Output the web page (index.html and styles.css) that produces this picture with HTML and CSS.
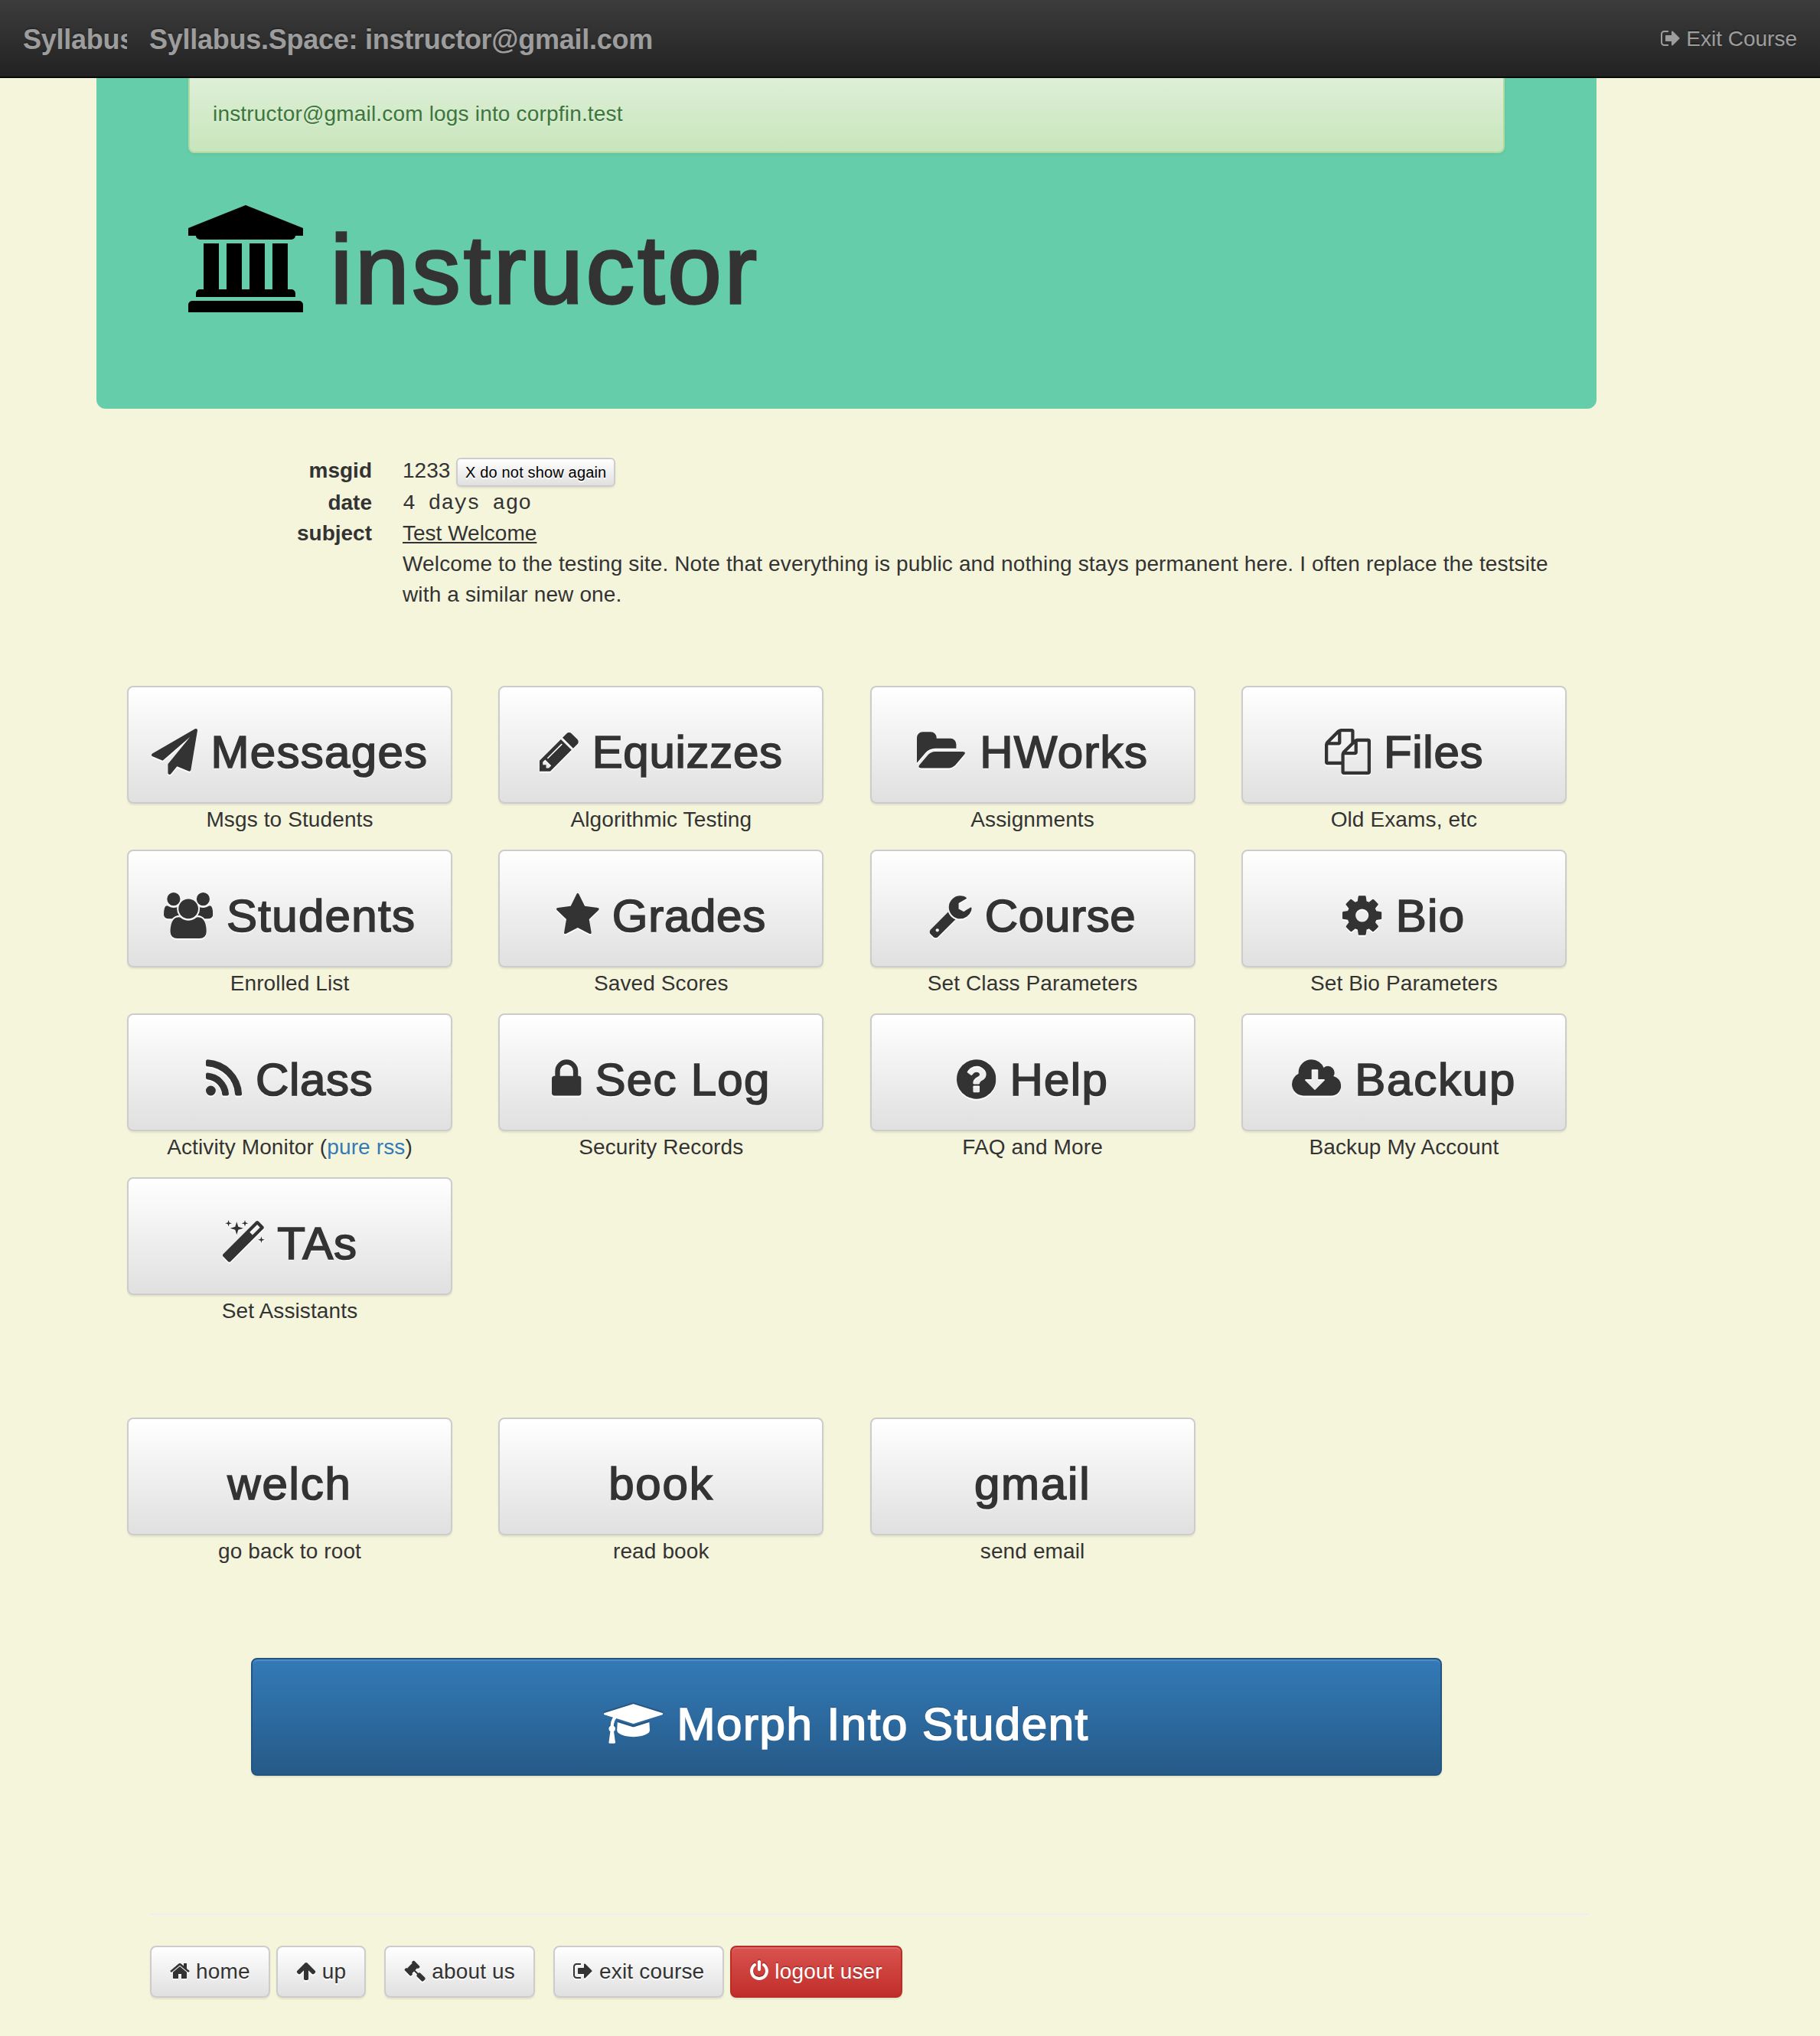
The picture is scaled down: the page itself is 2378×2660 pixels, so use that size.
FILE: index.html
```html
<!DOCTYPE html>
<html lang="en">
<head>
<meta charset="utf-8">
<title>Syllabus.Space</title>
<link rel="stylesheet" href="styles.css">
</head>
<body>
<svg class="sprite" width="0" height="0">
<symbol id="university" viewBox="0 0 1920 1792"><path d="M960 0l960 384v128h-128q0 26-20.5 45t-48.5 19h-1526q-28 0-48.5-19t-20.5-45h-128v-128zm-704 640h256v768h128v-768h256v768h128v-768h256v768h128v-768h256v768h59q28 0 48.5 19t20.5 45v64h-1664v-64q0-26 20.5-45t48.5-19h59v-768zm1595 960q28 0 48.5 19t20.5 45v128h-1920v-128q0-26 20.5-45t48.5-19h1782z"/></symbol>
<symbol id="plane" viewBox="0 0 1792 1792"><path d="M1764 11q33 24 27 64l-256 1536q-5 29-32 45-14 8-31 8-11 0-24-5l-453-185-242 295q-18 23-49 23-13 0-22-4-19-7-30.5-23.5t-11.5-36.5v-349l864-1059-1069 925-395-162q-37-14-40-55-2-40 32-59l1664-960q15-9 32-9 20 0 36 11z"/></symbol>
<symbol id="pencil" viewBox="128 0 1536 1792"><path d="M491 1536l91-91-235-235-91 91v107h128v128h107zm523-928q0-22-22-22-10 0-17 7l-542 542q-7 7-7 17 0 22 22 22 10 0 17-7l542-542q7-7 7-17zm-54-192l416 416-832 832h-416v-416zm683 96q0 53-37 90l-166 166-416-416 166-165q36-38 90-38 53 0 91 38l235 234q37 39 37 91z"/></symbol>
<symbol id="folder" viewBox="-64 0 1920 1792"><path d="M1815 952q0 31-31 66l-336 396q-43 51-120.5 86.5t-143.5 35.5h-1088q-34 0-60.5-13t-26.5-43q0-31 31-66l336-396q43-51 120.5-86.5t143.5-35.5h1088q34 0 60.5 13t26.5 43zm-343-344v160h-832q-94 0-197 47.5t-164 119.5l-337 396-5 6q0-4-.5-12.5t-.5-12.5v-960q0-92 66-158t158-66h320q92 0 158 66t66 158v32h544q92 0 158 66t66 158z"/></symbol>
<symbol id="files" viewBox="0 0 1792 1792"><path d="M1696 384q40 0 68 28t28 68v1216q0 40-28 68t-68 28h-960q-40 0-68-28t-28-68v-288h-544q-40 0-68-28t-28-68v-672q0-40 20-88t48-76l408-408q28-28 76-48t88-20h416q40 0 68 28t28 68v328q68-40 128-40h416zm-544 213l-299 299h299v-299zm-640-384l-299 299h299v-299zm196 647l316-316v-416h-384v416q0 40-28 68t-68 28h-416v640h512v-256q0-40 20-88t48-76zm956 804v-1152h-384v416q0 40-28 68t-68 28h-416v640h896z"/></symbol>
<symbol id="users" viewBox="0 0 1920 1792"><path transform="matrix(1 0 0 -1 0 1536)" d="M593 640q-162 -5 -265 -128h-134q-82 0 -138 40.5t-56 118.5q0 353 124 353q6 0 43.5 -21t97.5 -42.5t119 -21.5q67 0 133 23q-5 -37 -5 -66q0 -139 81 -256zM1664 3q0 -120 -73 -189.5t-194 -69.5h-874q-121 0 -194 69.5t-73 189.5q0 53 3.5 103.5t14 109t26.5 108.5t43 97.5t62 81t85.5 53.5t111.5 20q10 0 43 -21.5t73 -48t107 -48t135 -21.5t135 21.5t107 48t73 48t43 21.5q61 0 111.5 -20t85.5 -53.5t62 -81t43 -97.5t26.5 -108.5t14 -109t3.5 -103.5zM640 1280q0 -106 -75 -181t-181 -75t-181 75t-75 181t75 181t181 75t181 -75t75 -181zM1344 896q0 -159 -112.5 -271.5t-271.5 -112.5t-271.5 112.5t-112.5 271.5t112.5 271.5t271.5 112.5t271.5 -112.5t112.5 -271.5zM1920 671q0 -78 -56 -118.5t-138 -40.5h-134q-103 123 -265 128q81 117 81 256q0 29 -5 66q66 -23 133 -23q59 0 119 21.5t97.5 42.5t43.5 21q124 0 124 -353zM1792 1280q0 -106 -75 -181t-181 -75t-181 75t-75 181t75 181t181 75t181 -75t75 -181z"/></symbol>
<symbol id="star" viewBox="64 0 1664 1792"><path d="M1728 647q0 22-26 48l-363 354 86 500q1 7 1 20 0 21-10.5 35.5t-30.5 14.5q-19 0-40-12l-449-236-449 236q-22 12-40 12-21 0-31.5-14.5t-10.5-35.5q0-6 2-20l86-500-364-354q-25-27-25-48 0-37 56-46l502-73 225-455q19-41 49-41t49 41l225 455 502 73q56 9 56 46z"/></symbol>
<symbol id="wrench" viewBox="64 0 1664 1792"><path d="M448 1472q0-26-19-45t-45-19-45 19-19 45 19 45 45 19 45-19 19-45zm644-420l-682 682q-37 37-90 37-52 0-91-37l-106-108q-38-36-38-90 0-53 38-91l681-681q39 98 114.5 173.5t173.5 114.5zm634-435q0 39-23 106-47 134-164.5 217.5t-258.5 83.5q-185 0-316.5-131.5t-131.5-316.5 131.5-316.5 316.5-131.5q58 0 121.5 16.5t107.5 46.5q16 11 16 28t-16 28l-293 169v224l193 107q5-3 79-48.5t135.5-81 70.5-35.5q15 0 23.5 10t8.5 25z"/></symbol>
<symbol id="cog" viewBox="128 0 1536 1792"><path d="M1152 896q0-106-75-181t-181-75-181 75-75 181 75 181 181 75 181-75 75-181zm512-109v222q0 12-8 23t-20 13l-185 28q-19 54-39 91 35 50 107 138 10 12 10 25t-9 23q-27 37-99 108t-94 71q-12 0-26-9l-138-108q-44 23-91 38-16 136-29 186-7 28-36 28h-222q-14 0-24.5-8.5t-11.5-21.5l-28-184q-49-16-90-37l-141 107q-10 9-25 9-14 0-25-11-126-114-165-168-7-10-7-23 0-12 8-23 15-21 51-66.5t54-70.5q-27-50-41-99l-183-27q-13-2-21-12.5t-8-23.5v-222q0-12 8-23t19-13l186-28q14-46 39-92-40-57-107-138-10-12-10-24 0-10 9-23 26-36 98.5-107.5t94.5-71.5q13 0 26 10l138 107q44-23 91-38 16-136 29-186 7-28 36-28h222q14 0 24.5 8.5t11.5 21.5l28 184q49 16 90 37l142-107q9-9 24-9 13 0 25 10 129 119 165 170 7 8 7 22 0 12-8 23-15 21-51 66.5t-54 70.5q26 50 41 98l183 28q13 2 21 12.5t8 23.5z"/></symbol>
<symbol id="rss" viewBox="192 0 1408 1792"><path d="M576 1344q0 80-56 136t-136 56-136-56-56-136 56-136 136-56 136 56 56 136zm512 123q2 28-17 48-18 21-47 21h-135q-25 0-43-16.5t-20-41.5q-22-229-184.5-391.5t-391.5-184.5q-25-2-41.5-20t-16.5-43v-135q0-29 21-47 17-17 43-17h5q160 13 306 80.5t259 181.5q114 113 181.5 259t80.5 306zm512 2q2 27-18 47-18 20-46 20h-143q-26 0-44.5-17.5t-19.5-42.5q-12-215-101-408.5t-231.5-336-336-231.5-408.5-102q-25-1-42.5-19.5t-17.5-43.5v-143q0-28 20-46 18-18 44-18h3q262 13 501.5 120t425.5 294q187 186 294 425.5t120 501.5z"/></symbol>
<symbol id="lock" viewBox="320 0 1152 1792"><path d="M640 768h512v-192q0-106-75-181t-181-75-181 75-75 181v192zm832 96v576q0 40-28 68t-68 28h-960q-40 0-68-28t-28-68v-576q0-40 28-68t68-28h32v-192q0-184 132-316t316-132 316 132 132 316v192h32q40 0 68 28t28 68z"/></symbol>
<symbol id="question" viewBox="128 0 1536 1792"><path d="M1024 1376v-192q0-14-9-23t-23-9h-192q-14 0-23 9t-9 23v192q0 14 9 23t23 9h192q14 0 23-9t9-23zm256-672q0-88-55.5-163t-138.5-116-170-41q-243 0-371 213-15 24 8 42l132 100q7 6 19 6 16 0 25-12 53-68 86-92 34-24 86-24 48 0 85.5 26t37.5 59q0 38-20 61t-68 45q-63 28-115.5 86.5t-52.5 125.5v36q0 14 9 23t23 9h192q14 0 23-9t9-23q0-19 21.5-49.5t54.5-49.5q32-18 49-28.5t46-35 44.5-48 28-60.5 12.5-81zm384 192q0 209-103 385.5t-279.5 279.5-385.5 103-385.5-103-279.5-279.5-103-385.5 103-385.5 279.5-279.5 385.5-103 385.5 103 279.5 279.5 103 385.5z"/></symbol>
<symbol id="cloud" viewBox="-64 0 1920 1792"><path d="M1216 928q0-14-9-23t-23-9h-224v-352q0-13-9.5-22.5t-22.5-9.5h-192q-13 0-22.5 9.5t-9.5 22.5v352h-224q-13 0-22.5 9.5t-9.5 22.5q0 14 9 23l352 352q9 9 23 9t23-9l351-351q10-12 10-24zm640 224q0 159-112.5 271.5t-271.5 112.5h-1088q-185 0-316.5-131.5t-131.5-316.5q0-130 70-240t188-165q-2-30-2-43 0-212 150-362t362-150q156 0 285.5 87t188.5 231q71-62 166-62 106 0 181 75t75 181q0 76-41 138 130 31 213.5 135.5t83.5 238.5z"/></symbol>
<symbol id="magic" viewBox="0 0 1664 1792"><path transform="matrix(1 0 0 -1 0 1536)" d="M1190 955l293 293l-107 107l-293 -293zM1637 1248q0 -27 -18 -45l-1286 -1286q-18 -18 -45 -18t-45 18l-198 198q-18 18 -18 45t18 45l1286 1286q18 18 45 18t45 -18l198 -198q18 -18 18 -45zM286 1438l98 -30l-98 -30l-30 -98l-30 98l-98 30l98 30l30 98zM636 1276l196 -60l-196 -60l-60 -196l-60 196l-196 60l196 60l60 196zM1566 798l98 -30l-98 -30l-30 -98l-30 98l-98 30l98 30l30 98zM926 1438l98 -30l-98 -30l-30 -98l-30 98l-98 30l98 30l30 98z"/></symbol>
<symbol id="cap" viewBox="0 0 2304 1792"><path transform="matrix(1 0 0 -1 0 1536)" d="M1774 700l18 -316q4 -69 -82 -128t-235 -93.5t-323 -34.5t-323 34.5t-235 93.5t-82 128l18 316l574 -181q22 -7 48 -7t48 7zM2304 1024q0 -23 -22 -31l-1120 -352q-4 -1 -10 -1t-10 1l-652 206q-43 -34 -71 -111.5t-34 -178.5q63 -36 63 -109q0 -69 -58 -107l58 -433q2 -14 -8 -25q-9 -11 -24 -11h-192q-15 0 -24 11q-10 11 -8 25l58 433q-58 38 -58 107q0 73 65 111q11 207 98 330l-333 104q-22 8 -22 31t22 31l1120 352q4 1 10 1t10 -1l1120 -352q22 -8 22 -31z"/></symbol>
<symbol id="home" viewBox="0 0 1664 1792"><path transform="matrix(1 0 0 -1 0 1536)" d="M1408 544v-480q0 -26 -19 -45t-45 -19h-384v384h-256v-384h-384q-26 0 -45 19t-19 45v480q0 1 0.5 3t0.5 3l575 474l575 -474q1 -2 1 -6zM1631 613l-62 -74q-8 -9 -21 -11h-3q-13 0 -21 7l-692 577l-692 -577q-12 -8 -24 -7q-13 2 -21 11l-62 74q-8 10 -7 23.5t11 21.5l719 599q32 26 76 26t76 -26l244 -204v195q0 14 9 23t23 9h192q14 0 23 -9t9 -23v-408l219 -182q10 -8 11 -21.5t-7 -23.5z"/></symbol>
<symbol id="up" viewBox="0 0 1664 1792"><path transform="matrix(1 0 0 -1 0 1536)" d="M1611 565q0 -51 -37 -90l-75 -75q-38 -38 -91 -38q-54 0 -90 38l-294 293v-704q0 -52 -37.5 -84.5t-90.5 -32.5h-128q-53 0 -90.5 32.5t-37.5 84.5v704l-294 -293q-36 -38 -90 -38t-90 38l-75 75q-38 38 -38 90q0 53 38 91l651 651q35 37 90 37q54 0 91 -37l651 -651q37 -39 37 -91z"/></symbol>
<symbol id="gavel" viewBox="0 0 1792 1792"><path transform="matrix(1 0 0 -1 0 1536)" d="M1771 0q0 -53 -37 -90l-107 -108q-39 -37 -91 -37q-53 0 -90 37l-363 364q-38 36 -38 90q0 53 43 96l-256 256l-126 -126q-14 -14 -34 -14t-34 14q2 -2 12.5 -12t12.5 -13t10 -11.5t10 -13.5t6 -13.5t5.5 -16.5t1.5 -18q0 -38 -28 -68q-3 -3 -16.5 -18t-19 -20.5t-18.5 -16.5t-22 -15.5t-22 -9t-26 -4.5q-40 0 -68 28l-408 408q-28 28 -28 68q0 13 4.5 26t9 22t15.5 22t16.5 18.5t20.5 19t18 16.5q30 28 68 28q10 0 18 -1.5t16.5 -5.5t13.5 -6t13.5 -10t11.5 -10t13 -12.5t12 -12.5q-14 14 -14 34t14 34l348 348q14 14 34 14t34 -14q-2 2 -12.5 12t-12.5 13t-10 11.5t-10 13.5t-6 13.5t-5.5 16.5t-1.5 18q0 38 28 68q3 3 16.5 18t19 20.5t18.5 16.5t22 15.5t22 9t26 4.5q40 0 68 -28l408 -408q28 -28 28 -68q0 -13 -4.5 -26t-9 -22t-15.5 -22t-16.5 -18.5t-20.5 -19t-18 -16.5q-30 -28 -68 -28q-10 0 -18 1.5t-16.5 5.5t-13.5 6t-13.5 10t-11.5 10t-13 12.5t-12 12.5q14 -14 14 -34t-14 -34l-126 -126l256 -256q43 43 96 43q52 0 91 -37l363 -363q37 -39 37 -91z"/></symbol>
<symbol id="signout" viewBox="0 0 1664 1792"><path transform="matrix(1 0 0 -1 0 1536)" d="M640 96q0 -4 1 -20t0.5 -26.5t-3 -23.5t-10 -19.5t-20.5 -6.5h-320q-119 0 -203.5 84.5t-84.5 203.5v704q0 119 84.5 203.5t203.5 84.5h320q13 0 22.5 -9.5t9.5 -22.5q0 -4 1 -20t0.5 -26.5t-3 -23.5t-10 -19.5t-20.5 -6.5h-320q-66 0 -113 -47t-47 -113v-704q0 -66 47 -113t113 -47h288h11h13t11.5 -1t11.5 -3t8 -5.5t7 -9t2 -13.5zM1568 640q0 -26 -19 -45l-544 -544q-19 -19 -45 -19t-45 19t-19 45v288h-448q-26 0 -45 19t-19 45v384q0 26 19 45t45 19h448v288q0 26 19 45t45 19t45 -19l544 -544q19 -19 19 -45z"/></symbol>
<symbol id="power" viewBox="0 0 1536 1792"><path transform="matrix(1 0 0 -1 0 1536)" d="M1536 640q0 -156 -61 -298t-164 -245t-245 -164t-298 -61t-298 61t-245 164t-164 245t-61 298q0 182 80.5 343t226.5 270q43 32 95.5 25t83.5 -50q32 -42 24.5 -94.5t-49.5 -84.5q-98 -74 -151.5 -181t-53.5 -228q0 -104 40.5 -198.5t109.5 -163.5t163.5 -109.5t198.5 -40.5t198.5 40.5t163.5 109.5t109.5 163.5t40.5 198.5q0 121 -53.5 228t-151.5 181q-42 32 -49.5 84.5t24.5 94.5q31 43 84 50t95 -25q146 -109 226.5 -270t80.5 -343zM896 1408v-640q0 -52 -38 -90t-90 -38t-90 38t-38 90v640q0 52 38 90t90 38t90 -38t38 -90z"/></symbol>
</svg>

<nav class="navbar">
  <a class="brand brand-short">Syllabus.Space</a>
  <a class="brand">Syllabus.Space: instructor@gmail.com</a>
  <a class="exit"><svg class="icon w1664"><use href="#signout"/></svg> Exit Course</a>
</nav>

<header class="jumbotron">
  <div class="alert">instructor@gmail.com logs into corpfin.test</div>
  <h1 class="title"><svg class="icon w1920 seal"><use href="#university"/></svg> <span class="who">instructor</span></h1>
</header>

<dl class="message">
  <dt>msgid</dt><dd class="first">1233 <button class="btn btn-xs">X do not show again</button></dd>
  <dt>date</dt><dd class="mono">4 days ago</dd>
  <dt>subject</dt><dd><u>Test Welcome</u></dd>
  <dd class="body">Welcome to the testing site. Note that everything is public and nothing stays permanent here. I often replace the testsite with a similar new one.</dd>
</dl>

<main class="tiles">
  <div class="tile"><a class="btn big"><svg class="icon w1792"><use href="#plane"/></svg> Messages</a><p>Msgs to Students</p></div>
  <div class="tile"><a class="btn big tight"><svg class="icon w1536"><use href="#pencil"/></svg> Equizzes</a><p>Algorithmic Testing</p></div>
  <div class="tile"><a class="btn big"><svg class="icon w1920"><use href="#folder"/></svg> HWorks</a><p>Assignments</p></div>
  <div class="tile"><a class="btn big tight"><svg class="icon w1792"><use href="#files"/></svg> Files</a><p>Old Exams, etc</p></div>
  <div class="tile"><a class="btn big"><svg class="icon w1920"><use href="#users"/></svg> Students</a><p>Enrolled List</p></div>
  <div class="tile"><a class="btn big tight"><svg class="icon w1664"><use href="#star"/></svg> Grades</a><p>Saved Scores</p></div>
  <div class="tile"><a class="btn big tight"><svg class="icon w1664"><use href="#wrench"/></svg> Course</a><p>Set Class Parameters</p></div>
  <div class="tile"><a class="btn big"><svg class="icon w1536"><use href="#cog"/></svg> Bio</a><p>Set Bio Parameters</p></div>
  <div class="tile"><a class="btn big tight"><svg class="icon w1408"><use href="#rss"/></svg> Class</a><p>Activity Monitor (<a class="link">pure rss</a>)</p></div>
  <div class="tile"><a class="btn big"><svg class="icon w1152"><use href="#lock"/></svg> Sec Log</a><p>Security Records</p></div>
  <div class="tile"><a class="btn big"><svg class="icon w1536"><use href="#question"/></svg> Help</a><p>FAQ and More</p></div>
  <div class="tile"><a class="btn big wide"><svg class="icon w1920"><use href="#cloud"/></svg> Backup</a><p>Backup My Account</p></div>
  <div class="tile"><a class="btn big tight"><svg class="icon w1664"><use href="#magic"/></svg> TAs</a><p>Set Assistants</p></div>
</main>

<section class="tiles links">
  <div class="tile"><a class="btn big wide">welch</a><p>go back to root</p></div>
  <div class="tile"><a class="btn big wide">book</a><p>read book</p></div>
  <div class="tile"><a class="btn big wide">gmail</a><p>send email</p></div>
</section>

<a class="btn big primary"><svg class="icon w2304"><use href="#cap"/></svg> Morph Into Student</a>

<footer class="footer">
  <a class="btn"><svg class="icon w1664"><use href="#home"/></svg> home</a>
  <a class="btn"><svg class="icon w1664"><use href="#up"/></svg> up</a>
  <a class="btn spaced"><svg class="icon w1792"><use href="#gavel"/></svg> about us</a>
  <a class="btn spaced"><svg class="icon w1664"><use href="#signout"/></svg> exit course</a>
  <a class="btn danger"><svg class="icon w1536"><use href="#power"/></svg> logout user</a>
</footer>
</body>
</html>
```
FILE: styles.css
```css
* { box-sizing: border-box; }
body {
  margin: 0;
  min-height: 2660px;
  background: #f5f5dc;
  color: #333;
  font: 28px/40px "Liberation Sans", Arial, sans-serif;
}
.sprite { position: absolute; }
.icon { height: 1em; vertical-align: -0.143em; fill: currentColor; overflow: visible; }
.w1152 { width: 0.643em; }
.w1408 { width: 0.786em; }
.w1536 { width: 0.857em; }
.w1664 { width: 0.929em; }
.w1792 { width: 1em; }
.w1920 { width: 1.071em; }
.w2304 { width: 1.286em; }

.navbar {
  position: relative;
  z-index: 1;
  display: flex;
  align-items: center;
  height: 102px;
  padding: 0 30px;
  border-bottom: 2px solid #080808;
  background: linear-gradient(#3c3c3c, #222);
  color: #9d9d9d;
  text-shadow: 0 -2px 0 rgba(0, 0, 0, .25);
}
.brand { padding-top: 3px; font-size: 36px; font-weight: bold; letter-spacing: -0.26px; white-space: nowrap; }
.brand-short { width: 136px; margin-right: 29px; overflow: hidden; }
.exit { margin-left: auto; padding-top: 1px; }

.jumbotron {
  width: 1960px;
  height: 438px;
  margin: -6px 0 0 126px;
  padding: 0 120px;
  border-radius: 0 0 12px 12px;
  background: #66cdaa;
}
.alert {
  height: 104px;
  padding: 31px 30px 29px;
  border: 2px solid #b2dba1;
  border-radius: 8px;
  background: linear-gradient(#dff0d8, #c8e5bc);
  box-shadow: 0 2px 4px rgba(0, 0, 0, .05);
  color: #3c763d;
  letter-spacing: 0.18px;
  text-shadow: 0 2px 0 rgba(255, 255, 255, .2);
}
.title {
  margin: 68px 0 0;
  font-size: 126px;
  line-height: 140px;
  font-weight: 500;
  -webkit-text-stroke: 0.028em currentColor;
}
.who { letter-spacing: 4.3px; }
.seal { margin-right: 1px; font-size: 140px; vertical-align: -12px; color: #000; -webkit-text-stroke: 0; }

.message {
  display: grid;
  grid-template-columns: 360px 1520px;
  grid-template-rows: 42px;
  column-gap: 40px;
  margin: 61px 0 0 126px;
}
.message dt { font-weight: bold; text-align: right; }
.message dd { margin: 0; }
.message .first { height: 42px; }
.message .mono { padding-top: 1px; margin-bottom: -1px; font-family: "Liberation Mono", "Courier New", monospace; }
.message .body { grid-column: 2; letter-spacing: 0.14px; }

.tiles {
  display: grid;
  grid-template-columns: repeat(4, 425px);
  gap: 20px 60.3px;
  margin: 99px 0 0 166px;
}
.tile { text-align: center; }
.tile p { margin: 0 0 -1px; padding-top: 1px; letter-spacing: 0.12px; }
.links { margin-top: 120px; }
.link { color: #337ab7; }

.btn {
  display: inline-block;
  padding: 12px 24px;
  border: 2px solid #ccc;
  border-radius: 8px;
  background: linear-gradient(#fff, #e0e0e0);
  box-shadow: inset 0 2px 0 rgba(255, 255, 255, .15), 0 2px 2px rgba(0, 0, 0, .075);
  color: #333;
  text-align: center;
  text-shadow: 0 2px 0 #fff;
  white-space: nowrap;
}
.btn .icon { filter: drop-shadow(0 2px 0 #fff); }
.btn-xs {
  padding: 2px 10px;
  border-radius: 6px;
  color: #000;
  font: 20px/30px "Liberation Sans", Arial, sans-serif;
  letter-spacing: 0.16px;
  vertical-align: 0;
}
.big {
  display: block;
  height: 154px;
  padding: 52px 0 0;
  font-size: 60px;
  line-height: 66px;
  letter-spacing: 1.3px;
  -webkit-text-stroke: 0.028em currentColor;
}
.big .icon { -webkit-text-stroke: 0; }
.tight { letter-spacing: 0.7px; }
.wide { letter-spacing: 1.8px; }
.primary {
  width: 1556px;
  margin: 120px 0 0 328px;
  border-color: #245580;
  background: linear-gradient(#337ab7, #265a88);
  color: #fff;
  letter-spacing: 1.55px;
  text-shadow: 0 -2px 0 rgba(0, 0, 0, .2);
}
.btn.primary .icon, .btn.danger .icon { filter: drop-shadow(0 -2px 0 rgba(0, 0, 0, .2)); }

.footer {
  display: flex;
  gap: 8px;
  width: 1880px;
  margin: 180px 0 0 196px;
  padding-top: 40px;
  border-top: 2px solid #eee;
  letter-spacing: 0.18px;
}
.spaced { margin-left: 16px; }
.danger {
  border-color: #b92c28;
  background: linear-gradient(#d9534f, #c12e2a);
  color: #fff;
  text-shadow: 0 -2px 0 rgba(0, 0, 0, .2);
}
```
